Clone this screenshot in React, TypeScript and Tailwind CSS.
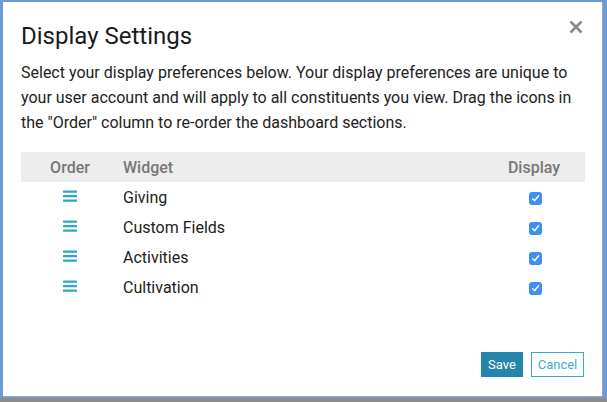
import React from "react";

const rows = ["Giving", "Custom Fields", "Activities", "Cultivation"];

function Bars() {
  return (
    <svg width="14" height="12" viewBox="0 0 14 12" className="block">
      <rect x="0" y="0.4" width="14" height="2.4" rx="0.5" fill="#2ba7cd" />
      <rect x="0" y="4.9" width="14" height="2.4" rx="0.5" fill="#2ba7cd" />
      <rect x="0" y="9.4" width="14" height="2.4" rx="0.5" fill="#2ba7cd" />
    </svg>
  );
}

function Check() {
  return (
    <div className="w-[13px] h-[13px] rounded-[3px] bg-[#3d8ff3] flex items-center justify-center">
      <svg width="9" height="9" viewBox="0 0 9 9">
        <path d="M1.6 4.8 L3.6 6.8 L7.6 1.8" fill="none" stroke="#fff" strokeWidth="1.4" strokeLinecap="round" strokeLinejoin="round" />
      </svg>
    </div>
  );
}

export default function App() {
  return (
    <div
      className="w-[607px] h-[402px] bg-[#6b9bd5] overflow-hidden flex flex-col"
      style={{ fontFamily: "Roboto, 'Liberation Sans', sans-serif" }}
    >
      <div className="pt-[2px] pl-[3px]">
        <div className="w-[599px] h-[394px] bg-white shadow-[1px_1px_0_#9aa7b8] flex flex-col px-[18px]">
          <div className="flex items-start justify-between pt-[20px]">
            <h1 className="text-[24px] leading-[28px] text-[#1a1a1a]">Display Settings</h1>
            <svg width="14" height="14" viewBox="0 0 14 14" className="mt-[-2px] mr-[1px]">
              <path d="M1.5 1.5 L12.5 12.5 M12.5 1.5 L1.5 12.5" stroke="#8a8a8a" strokeWidth="2.6" strokeLinecap="butt" />
            </svg>
          </div>
          <p className="mt-[10px] text-[16px] leading-[25px] text-[#222] pr-[10px]">
            Select your display preferences below. Your display preferences are unique to your user account and will apply to all constituents you view. Drag the icons in the "Order" column to re-order the dashboard sections.
          </p>
          <div className="mt-[17px] w-[564px]">
            <div className="h-[30px] bg-[#ededed] flex items-center text-[16px] font-medium text-[#777] pt-[1px]">
              <div className="w-[98px] text-center">Order</div>
              <div className="w-[4px]" />
              <div className="flex-1">Widget</div>
              <div className="w-[102px] text-center">Display</div>
            </div>
            {rows.map((r) => (
              <div key={r} className="h-[30px] flex items-center text-[16px] text-[#222]">
                <div className="w-[98px] flex justify-center pb-[3px]">
                  <Bars />
                </div>
                <div className="w-[4px]" />
                <div className="flex-1 pt-[2px]">{r}</div>
                <div className="w-[102px] flex justify-center pt-[3px] pl-[2px]">
                  <Check />
                </div>
              </div>
            ))}
          </div>
          <div className="flex-1" />
          <div className="flex justify-end gap-[8px] pb-[19px]">
            <button className="h-[25px] w-[42px] bg-[#2385a9] text-white text-[13px] leading-none">Save</button>
            <button className="h-[25px] w-[53px] border border-[#3aa8cc] text-[#44abd0] text-[13px] leading-none bg-white">Cancel</button>
          </div>
        </div>
      </div>
      <div className="h-[2px]" />
      <div className="flex-1 bg-[#8b8b8b]" />
    </div>
  );
}
